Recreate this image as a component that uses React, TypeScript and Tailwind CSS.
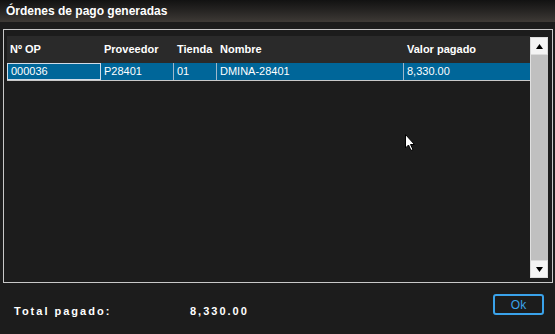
import React from "react";

const columns = [
  { key: "op", label: "Nº OP", width: "w-[94px]" },
  { key: "prov", label: "Proveedor", width: "w-[73px]" },
  { key: "tienda", label: "Tienda", width: "w-[43px]" },
  { key: "nombre", label: "Nombre", width: "w-[187px]" },
  { key: "valor", label: "Valor pagado", width: "flex-1" },
];

const rows = [
  { op: "000036", prov: "P28401", tienda: "01", nombre: "DMINA-28401", valor: "8,330.00" },
];

function ScrollArrow({ up }: { up?: boolean }) {
  return (
    <div className="h-[18px] w-full bg-[#f4f4f4] border border-[#dcdcdc] flex items-center justify-center">
      <svg width="7" height="5" viewBox="0 0 7 5">
        {up ? <polygon points="3.5,0 7,5 0,5" fill="#000" /> : <polygon points="0,0 7,0 3.5,5" fill="#000" />}
      </svg>
    </div>
  );
}

export default function App() {
  return (
    <div
      className="relative w-[555px] h-[334px] bg-[#1c1c1c] flex flex-col text-white overflow-hidden"
      style={{ fontFamily: '"Liberation Sans", Arial, sans-serif' }}
    >
      {/* title bar */}
      <div className="h-[22px] bg-gradient-to-b from-[#121212] to-[#3e3a36] flex items-center px-[6px]">
        <span className="text-[12px] font-bold leading-none">Órdenes de pago generadas</span>
      </div>

      {/* grid frame */}
      <div className="mt-[7px] ml-[3px] mr-[2px] h-[254px] border border-[#c8c8c8] pt-[6px] pl-[3px] pr-[4px] pb-[4px] flex">
        <div className="flex-1 flex flex-col">
          <div className="h-[27px] bg-[#2a2a2a] flex items-end pb-[8px]">
            {columns.map((c) => (
              <div key={c.key} className={`${c.width} pl-[3px] text-[11px] font-bold leading-none`}>
                {c.label}
              </div>
            ))}
          </div>
          {rows.map((r) => (
            <div key={r.op} className="h-[18px] bg-[#006699] flex border-b border-[#c8c8c8] text-[11px]">
              <div className="w-[94px] border border-[#d0dce8] pl-[3px] flex items-center">{r.op}</div>
              <div className="w-[73px] border-r border-[#9fb8cc] pl-[3px] flex items-center">{r.prov}</div>
              <div className="w-[43px] border-r border-[#9fb8cc] pl-[3px] flex items-center">{r.tienda}</div>
              <div className="w-[187px] border-r border-[#9fb8cc] pl-[3px] flex items-center">{r.nombre}</div>
              <div className="flex-1 pl-[3px] flex items-center">{r.valor}</div>
            </div>
          ))}
          <div className="flex-1 bg-[#1c1c1c]" />
        </div>
        <div className="w-[18px] mt-[1px] flex flex-col">
          <ScrollArrow up />
          <div className="flex-1 bg-[#c0c0c0] border-l border-[#e0e0e0]" />
          <ScrollArrow />
        </div>
      </div>

      {/* footer */}
      <div className="flex-1 flex items-start px-[14px]">
        <span className="mt-[20px] w-[176px] text-[11px] font-bold tracking-[2px]">Total pagado:</span>
        <span className="mt-[20px] text-[11px] font-bold tracking-[2px]">8,330.00</span>
        <button className="ml-auto mr-[-3px] mt-[11px] w-[51px] h-[21px] border-2 border-[#3aa2ea] rounded-[3px] text-[12px] text-[#3aa2ea] leading-none">
          Ok
        </button>
      </div>

      {/* mouse pointer */}
      <svg className="absolute left-[405px] top-[134px]" width="12" height="18" viewBox="0 0 12 18">
        <path d="M0.5 0.5 L0.5 14 L3.5 11 L6 16.5 L8 15.5 L5.5 10.5 L9.5 10.5 Z" fill="#fff" stroke="#000" strokeWidth="1" />
      </svg>
    </div>
  );
}
